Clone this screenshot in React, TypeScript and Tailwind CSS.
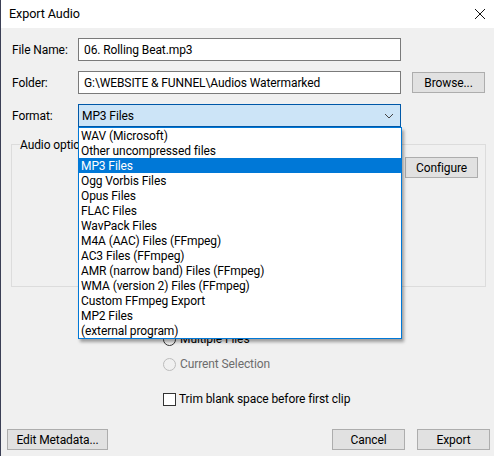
import React from 'react';

const FormatList = [
  'WAV (Microsoft)',
  'Other uncompressed files',
  'MP3 Files',
  'Ogg Vorbis Files',
  'Opus Files',
  'FLAC Files',
  'WavPack Files',
  'M4A (AAC) Files (FFmpeg)',
  'AC3 Files (FFmpeg)',
  'AMR (narrow band) Files (FFmpeg)',
  'WMA (version 2) Files (FFmpeg)',
  'Custom FFmpeg Export',
  'MP2 Files',
  '(external program)',
];

function Btn({ label, className = '' }: { label: string; className?: string }) {
  return (
    <button className={`flex h-[21px] items-center justify-center border border-[#adadad] bg-[#e1e1e1] pt-[2px] text-black ${className}`}>
      {label}
    </button>
  );
}

function Row({ label, value, children }: { label: string; value: string; children?: React.ReactNode }) {
  return (
    <div className="flex h-[23px] items-center">
      <span className="w-[77px] shrink-0 whitespace-nowrap pl-[11px] pt-[2px]">{label}</span>
      <div className="flex h-[23px] w-[323px] shrink-0 items-center border border-[#7a7a7a] bg-white pl-[5px] pt-[2px]">{value}</div>
      {children}
    </div>
  );
}

export default function App() {
  return (
    <div className="relative flex h-[456px] w-[494px] flex-col overflow-hidden border-l border-[#3b3f55] bg-[#f0f0f0] font-['Roboto',sans-serif] text-[12px] leading-[15px] tracking-[-0.1px] text-black">
      <div className="flex h-[28px] shrink-0 items-center justify-between bg-white pl-[8px] pr-[7px]">
        <span className="pb-[2px] text-[12.6px]">Export Audio</span>
        <svg width="12" height="12" viewBox="0 0 12 12" className="mr-[1px]">
          <path d="M1 1 L11 11 M11 1 L1 11" stroke="#111" strokeWidth="1" fill="none" />
        </svg>
      </div>

      <div className="flex flex-1 flex-col">
        <div className="mt-[10px] flex flex-col gap-[10px]">
          <Row label="File Name:" value="06. Rolling Beat.mp3" />
          <Row label="Folder:" value="G:\WEBSITE & FUNNEL\Audios Watermarked">
            <Btn label="Browse..." className="ml-[11px] w-[73px]" />
          </Row>
          <div className="relative flex h-[23px] items-center">
            <span className="w-[77px] shrink-0 pl-[11px] pt-[2px]">Format:</span>
            <div className="flex h-[23px] w-[323px] shrink-0 items-center justify-between border border-[#0058a8] bg-[#cce4f7] pl-[3px] pr-[6px]">
              <span className="pt-[2px]">MP3 Files</span>
              <svg width="10" height="6" viewBox="0 0 10 6">
                <path d="M1 1 L5 5 L9 1" stroke="#444" strokeWidth="1" fill="none" />
              </svg>
            </div>
            <div className="absolute left-[77px] top-[23px] z-10 w-[324px] border border-[#0078d7] bg-white shadow-[2px_3px_3px_rgba(0,0,0,0.35)]">
              {FormatList.map((name) => (
                <div
                  key={name}
                  className={`flex h-[15px] items-center pl-[2px] pt-[2px] ${name === 'MP3 Files' ? 'bg-[#0078d7] text-white' : ''}`}
                >
                  {name}
                </div>
              ))}
            </div>
          </div>
        </div>

        <fieldset className="ml-[10px] mt-[9px] h-[151px] w-[475px] border border-[#dcdcdc]">
          <legend className="ml-[8px] h-[16px] pt-[2px]">Audio options</legend>
          <div className="mt-[5px] flex justify-end pr-[7px]">
            <Btn label="Configure" className="w-[73px]" />
          </div>
        </fieldset>

        <div className="ml-[162px] mt-[44px] flex flex-col">
          <label className="flex h-[16px] items-center gap-[4px]">
            <span className="h-[13px] w-[13px] rounded-full border border-[#333] bg-[#f0f0f0]" />
            Multiple Files
          </label>
          <label className="mt-[9px] flex h-[16px] items-center gap-[4px] text-[#6d6d6d]">
            <span className="h-[13px] w-[13px] rounded-full border border-[#bcbcbc] bg-[#f0f0f0]" />
            Current Selection
          </label>
          <label className="mt-[19px] flex h-[16px] items-center gap-[3px]">
            <span className="h-[13px] w-[13px] border border-[#333] bg-white" />
            Trim blank space before first clip
          </label>
        </div>

        <div className="mt-[22px] flex pl-[6px] pr-[4px]">
          <Btn label="Edit Metadata..." className="w-[101px]" />
          <Btn label="Cancel" className="ml-auto w-[73px]" />
          <Btn label="Export" className="ml-[12px] w-[73px]" />
        </div>
      </div>
    </div>
  );
}
